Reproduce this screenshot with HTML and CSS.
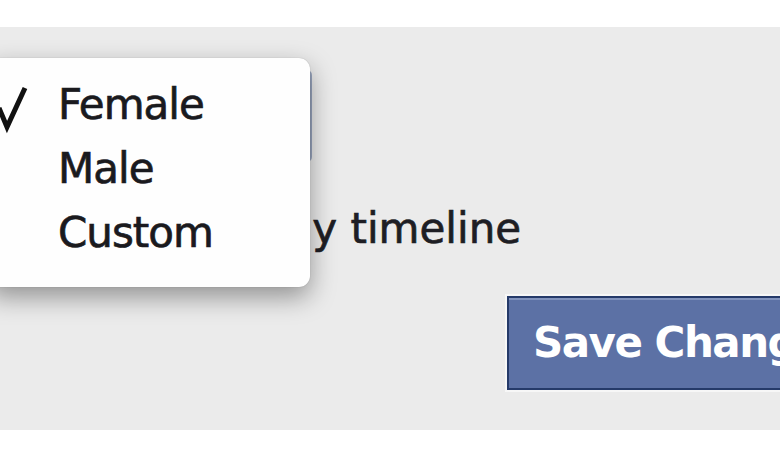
FILE: index.html
```html
<!DOCTYPE html>
<html>
<head>
<meta charset="utf-8">
<link rel="stylesheet" href="styles.css">
</head>
<body>
<div class="top"></div>
<div class="panel">
  <div class="select"><span class="arrow">&#9662;</span></div>
  <div class="row">Show in my timeline</div>
  <div class="actions">
    <div class="btn-wrap"><div class="btn">Save Changes</div></div>
  </div>
  <div class="menu">
    <div class="item"><span class="check"><svg width="40" height="64" viewBox="0 0 40 64"><path d="M11 35 L19 54 L37 15" fill="none" stroke="#111" stroke-width="5" stroke-linejoin="miter"/></svg></span><span>Female</span></div>
    <div class="item"><span class="check"></span><span>Male</span></div>
    <div class="item"><span class="check"></span><span>Custom</span></div>
  </div>
</div>
</body>
</html>
```
FILE: styles.css
```css
html, body {
  margin: 0;
  padding: 0;
  width: 780px;
  height: 456px;
  overflow: hidden;
  background: #ffffff;
  font-family: "DejaVu Sans", "Liberation Sans", sans-serif;
}
.top {
  height: 27px;
  background: #ffffff;
}
.panel {
  position: relative;
  height: 403px;
  background: #ebebeb;
  padding-top: 43px;
  box-sizing: border-box;
}
.select {
  width: 300px;
  height: 88px;
  margin-left: 8px;
  border: 2px solid #9aa6bf;
  border-radius: 5px;
  background: #f6f6f6;
  display: flex;
  justify-content: flex-end;
  align-items: center;
}
.arrow {
  color: #e2e2e2;
  font-size: 30px;
  margin-right: 34px;
}
.row {
  margin-top: 42px;
  padding-left: 93px;
  font-size: 42px;
  line-height: 50px;
  color: #1e1e24;
  white-space: nowrap;
  -webkit-text-stroke: 0.7px #1e1e24;
}
.actions {
  margin-top: 40px;
  padding-left: 505px;
}
.btn-wrap {
  display: inline-block;
  border: 2px solid #f7f7f7;
  white-space: nowrap;
}
.btn {
  border: 2px solid #253a69;
  background: #5c71a5;
  box-shadow: inset 0 2px 0 #8193bd;
  color: #ffffff;
  font-weight: bold;
  font-size: 42px;
  line-height: 90px;
  height: 90px;
  padding: 0 24px;
  letter-spacing: -1.5px;
  width: 400px;
}
.menu {
  position: absolute;
  left: -12px;
  top: 31px;
  width: 322px;
  height: 229px;
  box-sizing: border-box;
  padding-top: 15px;
  background: #fefefe;
  border-radius: 11px;
  box-shadow: 0 10px 26px rgba(0, 0, 0, 0.38), 0 0 1px rgba(0, 0, 0, 0.3);
}
.item {
  display: flex;
  align-items: center;
  height: 64px;
  font-size: 42px;
  line-height: 64px;
  letter-spacing: -1px;
  color: #1a1a1e;
  -webkit-text-stroke: 0.7px #1a1a1e;
}
.check {
  width: 70px;
  height: 64px;
  display: flex;
  align-items: center;
  justify-content: flex-start;
}
.check svg {
  display: block;
}
```
